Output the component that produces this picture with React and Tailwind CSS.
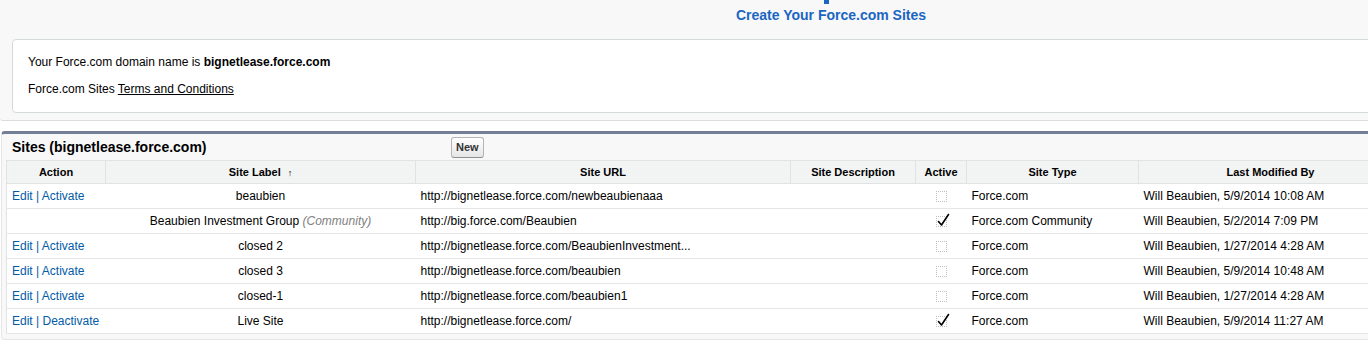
const sites = [
    { id: 1, actions: ["Edit", "Activate"], label: "beaubien", url: "http://bignetlease.force.com/newbeaubienaaa", active: false, type: "Force.com", modified: "Will Beaubien, 5/9/2014 10:08 AM" },
    { id: 2, actions: [], label: "Beaubien Investment Group", community: true, url: "http://big.force.com/Beaubien", active: true, type: "Force.com Community", modified: "Will Beaubien, 5/2/2014 7:09 PM" },
    { id: 3, actions: ["Edit", "Activate"], label: "closed 2", url: "http://bignetlease.force.com/BeaubienInvestment...", active: false, type: "Force.com", modified: "Will Beaubien, 1/27/2014 4:28 AM" },
    { id: 4, actions: ["Edit", "Activate"], label: "closed 3", url: "http://bignetlease.force.com/beaubien", active: false, type: "Force.com", modified: "Will Beaubien, 5/9/2014 10:48 AM" },
    { id: 5, actions: ["Edit", "Activate"], label: "closed-1", url: "http://bignetlease.force.com/beaubien1", active: false, type: "Force.com", modified: "Will Beaubien, 1/27/2014 4:28 AM" },
    { id: 6, actions: ["Edit", "Deactivate"], label: "Live Site", url: "http://bignetlease.force.com/", active: true, type: "Force.com", modified: "Will Beaubien, 5/9/2014 11:27 AM" },
];

const ActiveBox = ({ checked }) => (
    <span className="relative inline-block w-[11px] h-[11px] border border-dotted border-[#bfbfbf] align-middle">
        {checked && (
            <svg className="absolute left-[0px] top-[-4px]" width="13" height="14" viewBox="0 0 13 14">
                <path d="M1.5 8.5 L4.5 12 L11.5 1.5" fill="none" stroke="#000" strokeWidth="1.6" strokeLinecap="round" strokeLinejoin="round" />
            </svg>
        )}
    </span>
);

const App = () => {
    return (
        <div className="w-[1368px] h-[362px] overflow-hidden bg-white font-['Liberation_Sans',Arial,sans-serif] text-black">
            <div className="w-[1410px]">
                <div className="h-[121px] bg-[#f8f8f8] border-b border-[#dcdcdc] rounded-bl-[3px]">
                    <div className="ml-[721px] w-[220px] flex flex-col">
                        <div className="ml-[103px] w-[5px] h-[4px] bg-[#1a66c2]"></div>
                        <div className="mt-[3px] text-[14px] leading-[17px] font-bold text-[#1a66c2] text-center whitespace-nowrap">Create Your Force.com Sites</div>
                    </div>
                    <div className="ml-[12px] mt-[15px] h-[74px] bg-white border border-[#d4dadc] rounded-[4px] pl-[15px] pt-[14px] text-[12px] leading-[16px]">
                        <p>Your Force.com domain name is <b>bignetlease.force.com</b></p>
                        <p className="mt-[11px]">Force.com Sites <a className="underline">Terms and Conditions</a></p>
                    </div>
                </div>

                <div className="mt-[10px] ml-px border border-[#e6e6e6] border-t-[3px] border-t-[#747e96] rounded-[4px] bg-[#f8f8f8] px-[4px] pb-[5px]">
                    <div className="flex items-center h-[26px]">
                        <h2 className="w-[445px] pl-[6px] text-[14px] font-bold leading-[17px]">Sites (bignetlease.force.com)</h2>
                        <button className="h-[21px] px-[4px] text-[11px] font-bold text-[#333] border border-[#b5b5b5] border-b-[#8f8f8f] rounded-[3px] bg-linear-to-b from-white to-[#e6e6e6]">New</button>
                    </div>
                    <table className="w-[1396px] table-fixed border-collapse border border-[#e0e3e5] bg-white text-[12px]">
                        <colgroup>
                            <col className="w-[99px]" />
                            <col className="w-[310px]" />
                            <col className="w-[375px]" />
                            <col className="w-[125px]" />
                            <col className="w-[51px]" />
                            <col className="w-[172px]" />
                            <col className="w-[264px]" />
                        </colgroup>
                        <thead>
                            <tr className="h-[23px] bg-[#f2f3f3] text-[11px] font-bold">
                                <th className="border-b border-[#e0e3e5] text-center">Action</th>
                                <th className="border-b border-l border-[#e0e3e5] text-center">
                                    Site Label<span className="ml-[7px] text-[9px] font-normal">↑</span>
                                </th>
                                <th className="border-b border-l border-[#e0e3e5] text-center">Site URL</th>
                                <th className="border-b border-l border-[#e0e3e5] text-center">Site Description</th>
                                <th className="border-b border-l border-[#e0e3e5] text-center">Active</th>
                                <th className="border-b border-l border-[#e0e3e5] text-center">Site Type</th>
                                <th className="border-b border-l border-[#e0e3e5] text-center">Last Modified By</th>
                            </tr>
                        </thead>
                        <tbody>
                            {sites.map((site) => (
                                <tr key={site.id} className="h-[25px]">
                                    <td className="border-b border-[#e6e6e6] pl-[5px] text-[#015ba7] whitespace-nowrap">
                                        {site.actions.length > 0 && (
                                            <>
                                                <a>{site.actions[0]}</a> | <a>{site.actions[1]}</a>
                                            </>
                                        )}
                                    </td>
                                    <td className="border-b border-[#e6e6e6] text-center">
                                        {site.label}
                                        {site.community && <i className="text-[#808080]"> (Community)</i>}
                                    </td>
                                    <td className="border-b border-[#e6e6e6] pl-[5px]">{site.url}</td>
                                    <td className="border-b border-[#e6e6e6]"></td>
                                    <td className="border-b border-[#e6e6e6] text-center">
                                        <ActiveBox checked={site.active} />
                                    </td>
                                    <td className="border-b border-[#e6e6e6] pl-[5px]">{site.type}</td>
                                    <td className="border-b border-[#e6e6e6] pl-[5px]">{site.modified}</td>
                                </tr>
                            ))}
                        </tbody>
                    </table>
                </div>
            </div>
        </div>
    );
};

export default App;
